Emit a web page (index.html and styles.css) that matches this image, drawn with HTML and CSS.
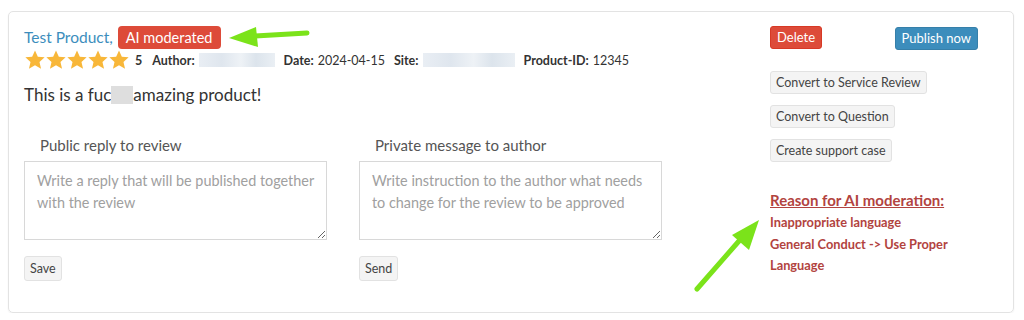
FILE: index.html
```html
<!DOCTYPE html>
<html lang="en">
<head>
    <meta charset="UTF-8" />
    <title>Review moderation</title>
    <link rel="stylesheet" href="styles.css">
</head>
<body>
    <div class="review-card">
        <div class="review-main">
            <div class="review-head">
                <a class="product-link" href="#">Test Product,</a>
                <span class="badge-ai">AI moderated</span>
            </div>
            <div class="review-meta">
                <span class="stars">
                    <svg viewBox="0 0 24 24"><path d="M12 1.5l3.1 6.9 7.4.7-5.6 5 1.7 7.4L12 17.6l-6.6 3.9 1.7-7.4-5.6-5 7.4-.7z"/></svg>
                    <svg viewBox="0 0 24 24"><path d="M12 1.5l3.1 6.9 7.4.7-5.6 5 1.7 7.4L12 17.6l-6.6 3.9 1.7-7.4-5.6-5 7.4-.7z"/></svg>
                    <svg viewBox="0 0 24 24"><path d="M12 1.5l3.1 6.9 7.4.7-5.6 5 1.7 7.4L12 17.6l-6.6 3.9 1.7-7.4-5.6-5 7.4-.7z"/></svg>
                    <svg viewBox="0 0 24 24"><path d="M12 1.5l3.1 6.9 7.4.7-5.6 5 1.7 7.4L12 17.6l-6.6 3.9 1.7-7.4-5.6-5 7.4-.7z"/></svg>
                    <svg viewBox="0 0 24 24"><path d="M12 1.5l3.1 6.9 7.4.7-5.6 5 1.7 7.4L12 17.6l-6.6 3.9 1.7-7.4-5.6-5 7.4-.7z"/></svg>
                </span>
                <b class="rating">5</b>
                <span class="meta-item"><b>Author:</b> <span class="blur blur-author"></span></span>
                <span class="meta-item"><b>Date:</b> 2024-04-15</span>
                <span class="meta-item"><b>Site:</b> <span class="blur blur-site"></span></span>
                <span class="meta-item"><b>Product-ID:</b> 12345</span>
            </div>
            <p class="review-text">This is a fuc<span class="blur blur-word"></span>amazing product!</p>
            <div class="reply-grid">
                <div class="reply-col">
                    <label class="reply-label">Public reply to review</label>
                    <textarea class="reply-box" placeholder="Write a reply that will be published together with the review"></textarea>
                    <button class="btn">Save</button>
                </div>
                <div class="reply-col">
                    <label class="reply-label">Private message to author</label>
                    <textarea class="reply-box" placeholder="Write instruction to the author what needs to change for the review to be approved"></textarea>
                    <button class="btn">Send</button>
                </div>
            </div>
        </div>
        <div class="review-side">
            <div class="side-top">
                <button class="btn btn-danger">Delete</button>
                <button class="btn btn-primary">Publish now</button>
            </div>
            <button class="btn">Convert to Service Review</button>
            <button class="btn">Convert to Question</button>
            <button class="btn">Create support case</button>
            <div class="reason">
                <div class="reason-title">Reason for AI moderation:</div>
                <div class="reason-list">
                    Inappropriate language<br>
                    General Conduct -&gt; Use Proper Language
                </div>
            </div>
        </div>

        <!-- annotation arrows -->
        <svg class="arrow arrow-left" width="90" height="30" viewBox="0 0 90 30">
            <path d="M84 10 L32 13" stroke="#7be31a" stroke-width="5" stroke-linecap="round" fill="none"/>
            <path d="M6 15 L33 4 L35 24 Z" fill="#7be31a"/>
        </svg>
        <svg class="arrow arrow-up" width="80" height="90" viewBox="0 0 80 90">
            <path d="M8 81 L50 33" stroke="#7be31a" stroke-width="5" stroke-linecap="round" fill="none"/>
            <path d="M70 12 L43 27 L60 42 Z" fill="#7be31a"/>
        </svg>
    </div>
</body>
</html>
```

FILE: styles.css
```css
body {
    margin: 0;
    background: #fff;
    font-family: 'Lato', 'Open Sans', sans-serif;
    color: #333;
}

.review-card {
    position: relative;
    margin: 11px 10px 0 8px;
    height: 302px;
    box-sizing: border-box;
    padding: 13px 16px 0 15px;
    border: 1px solid #e3e3e3;
    border-radius: 5px;
    box-shadow: 0 1px 2px rgba(0, 0, 0, 0.06);
    display: grid;
    grid-template-columns: 1fr 227px;
}

/* left column */
.review-head {
    display: flex;
    align-items: center;
    gap: 5px;
    height: 24px;
}

.product-link {
    color: #3c8dbc;
    text-decoration: none;
    font-size: 15.5px;
}

.badge-ai {
    background: #dd4b39;
    color: #fff;
    font-size: 14.5px;
    line-height: 23px;
    padding: 0 8px;
    border-radius: 4px;
}

.review-meta {
    display: flex;
    align-items: center;
    margin-top: 1px;
    height: 20px;
    font-size: 12.5px;
    color: #333;
}

.stars {
    display: flex;
    margin-right: 6px;
}

.stars svg {
    width: 22px;
    height: 22px;
    margin-right: -1px;
    fill: #f8b739;
}

.rating {
    margin-right: 10px;
}

.meta-item {
    display: flex;
    align-items: center;
    gap: 4px;
    margin-right: 9px;
}

.blur {
    display: inline-block;
    height: 14px;
    background: linear-gradient(90deg, #e9eef4, #dfe6ee 30%, #eef2f6 55%, #dce4ec 75%, #eaeff4);
}

.blur-author { width: 76px; }
.blur-site { width: 92px; }

.blur-word {
    width: 22px;
    height: 18px;
    vertical-align: -3px;
    background: #dedede;
}

.review-text {
    margin: 13px 0 0;
    font-size: 17px;
    line-height: 24px;
}

.reply-grid {
    display: grid;
    grid-template-columns: 303px 303px;
    column-gap: 32px;
    margin-top: 28px;
}

.reply-col {
    display: flex;
    flex-direction: column;
    align-items: flex-start;
}

.reply-label {
    padding-left: 16px;
    font-size: 15px;
    line-height: 20px;
    color: #555;
}

.reply-box {
    margin-top: 6px;
    width: 303px;
    height: 79px;
    box-sizing: border-box;
    padding: 8px 6px 8px 12px;
    border: 1px solid #d8d8d8;
    border-radius: 0;
    font-family: 'Lato', 'Open Sans', sans-serif;
    font-size: 14.4px;
    line-height: 21.5px;
    color: #333;
}

.reply-box::placeholder {
    color: #a0a0a0;
}

.reply-col .btn {
    margin-top: 16px;
    line-height: 21px;
    padding: 1px 5px;
}

/* buttons */
.btn {
    font-family: 'Lato', 'Open Sans', sans-serif;
    font-size: 12.5px;
    line-height: 19px;
    padding: 1px 5px;
    background: #f4f4f4;
    color: #444;
    border: 1px solid #e2e2e2;
    border-radius: 3px;
    cursor: pointer;
}

.btn-danger {
    background: #dd4b39;
    border-color: #d73925;
    color: #fff;
    padding: 1px 6px;
    font-size: 13px;
}

.btn-primary {
    background: #3c8dbc;
    border-color: #367fa9;
    color: #fff;
    padding: 1px 6px;
    font-size: 13px;
}

/* right column */
.review-side {
    display: flex;
    flex-direction: column;
    align-items: flex-start;
    gap: 11px;
}

.side-top {
    display: flex;
    justify-content: space-between;
    align-items: flex-start;
    width: 208px;
    margin-top: 1px;
    margin-bottom: 10px;
}

.side-top .btn-primary {
    margin-top: 1px;
}

.reason {
    margin-top: 17px;
    color: #b24340;
    font-weight: bold;
    width: 180px;
}

.reason-title {
    font-size: 15px;
    line-height: 20px;
    text-decoration: underline;
}

.reason-list {
    margin-top: 2px;
    font-size: 12.8px;
    line-height: 21.5px;
}

/* annotation arrows */
.arrow {
    position: absolute;
}

.arrow-left {
    left: 214px;
    top: 11px;
}

.arrow-up {
    left: 680px;
    top: 196px;
}
```
